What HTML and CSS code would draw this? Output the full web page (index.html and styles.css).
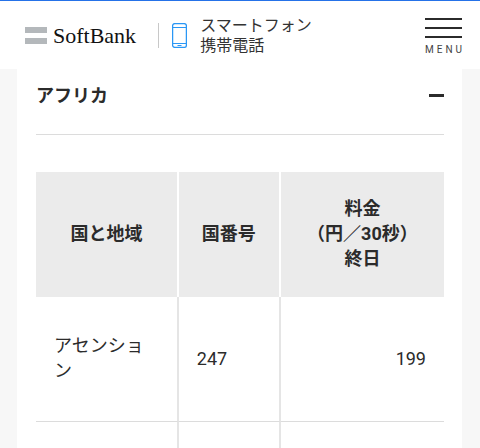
FILE: index.html
```html
<!DOCTYPE html>
<html lang="ja">

<head>
    <meta charset="UTF-8">
    <meta name="viewport" content="width=device-width, initial-scale=1.0">
    <link rel="stylesheet" href="styles.css">
    <title>SoftBank</title>
</head>

<body>
    <header class="header">
        <a href="#" class="logo">
            <svg class="logo_mark" width="22" height="17" viewBox="0 0 22 17">
                <path fill="#b4b8bb" d="M0 0h22v6H0zM0 11h22v6H0z" />
            </svg>
            <span class="logo_text">SoftBank</span>
        </a>
        <a href="#" class="category">
            <svg class="phone" width="15" height="25" viewBox="0 0 15 25" fill="none" stroke="#2a97f5">
                <rect x="0.6" y="0.6" width="13.8" height="23.8" rx="2.2" stroke-width="1.3" />
                <path d="M1 4.5h13M1 20.5h13" />
                <path d="M5.5 22.5h4" />
            </svg>
            <span class="category_text">スマートフォン<br>携帯電話</span>
        </a>
        <button class="menu" type="button">
            <span class="menu_line"></span>
            <span class="menu_line"></span>
            <span class="menu_line"></span>
            <span class="menu_text">MENU</span>
        </button>
    </header>
    <main class="main">
        <section class="card">
            <h2 class="title">
                <button class="title_button" type="button" aria-expanded="true">
                    <span>アフリカ</span>
                    <span class="minus"></span>
                </button>
            </h2>
            <table class="rates">
                <thead>
                    <tr>
                        <th class="col_area">国と地域</th>
                        <th class="col_code">国番号</th>
                        <th>料金<br>（円／30秒）<br>終日</th>
                    </tr>
                </thead>
                <tbody>
                    <tr>
                        <td>アセンション</td>
                        <td>247</td>
                        <td class="price">199</td>
                    </tr>
                    <tr>
                        <td></td>
                        <td></td>
                        <td></td>
                    </tr>
                </tbody>
            </table>
        </section>
    </main>
</body>

</html>
```
FILE: styles.css
```css
* {
    margin: 0;
    padding: 0;
    box-sizing: border-box;
}

body {
    height: 100vh;
    display: flex;
    flex-direction: column;
    overflow: hidden;
    background: #f7f7f7;
    color: #2b2b2b;
    font-family: Roboto, "Noto Sans CJK JP", sans-serif;
    font-size: 18px;
    line-height: 25px;
}

a {
    color: inherit;
    text-decoration: none;
}

button {
    border: none;
    background: none;
    color: inherit;
    font: inherit;
    cursor: pointer;
}

.header {
    display: flex;
    align-items: center;
    flex-shrink: 0;
    height: 69px;
    padding: 0 18px 0 25px;
    border-top: 1px solid #2572e8;
    background: #fff;
}

.logo {
    display: flex;
    align-items: center;
    gap: 6px;
}

.logo_text {
    color: #111;
    font-family: "Liberation Serif", serif;
    font-size: 22px;
}

.category {
    display: flex;
    align-items: center;
    gap: 13px;
    height: 25px;
    margin-left: 22px;
    padding-left: 13px;
    border-left: 1px solid #c8c8c8;
}

.category_text {
    padding-top: 2px;
    color: #333;
    font-size: 16px;
    line-height: 20px;
}

.menu {
    display: flex;
    flex-direction: column;
    gap: 7px;
    width: 37px;
    margin-top: 2px;
    margin-left: auto;
}

.menu_line {
    height: 2px;
    background: #2b2b2b;
}

.menu_text {
    color: #444;
    font-size: 10px;
    line-height: 10px;
    letter-spacing: 3px;
    text-align: left;
}

.main {
    flex: 1;
    min-height: 0;
    padding: 0 18px 0 17px;
}

.card {
    height: 100%;
    padding: 0 18px 0 19px;
    overflow: hidden;
    background: #fff;
}

.title {
    border-bottom: 1px solid #dcdcdc;
    font-size: 18px;
}

.title_button {
    display: flex;
    align-items: center;
    justify-content: space-between;
    width: 100%;
    padding: 14px 0 26px;
}

.minus {
    width: 15px;
    height: 3px;
    background: #2b2b2b;
}

.rates {
    width: 100%;
    margin-top: 37px;
    border-spacing: 0;
    table-layout: fixed;
}

.col_area {
    width: 35%;
}

.col_code {
    width: 25%;
}

th {
    padding: 24px 18px 26px;
    border-right: 2px solid #fff;
    background: #ebebeb;
}

td {
    padding: 36px 18px 38px;
    border-right: 2px solid #e5e5e5;
    border-bottom: 1px solid #dcdcdc;
}

th:last-child,
td:last-child {
    border-right: none;
}

.price {
    text-align: right;
}
```
